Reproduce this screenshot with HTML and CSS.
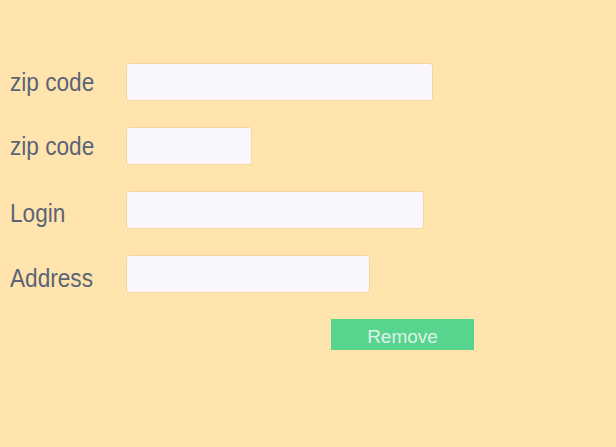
FILE: index.html
```html
<!DOCTYPE html>
<html>
<head>
<meta charset="utf-8">
<link rel="stylesheet" href="styles.css">
</head>
<body>
<form class="form">
  <div class="row"><label class="label"><span class="txt">zip code</span></label><input class="field w1" type="text"></div>
  <div class="row"><label class="label"><span class="txt">zip code</span></label><input class="field w2" type="text"></div>
  <div class="row"><label class="label low1"><span class="txt">Login</span></label><input class="field w3" type="text"></div>
  <div class="row"><label class="label low2"><span class="txt">Address</span></label><input class="field w4" type="text"></div>
  <div class="actions"><button class="btn" type="button">Remove</button></div>
</form>
</body>
</html>
```

FILE: styles.css
```css
html, body {
  margin: 0;
  padding: 0;
  background: #ffe4ad;
  height: 100%;
}
.form {
  display: flex;
  flex-direction: column;
  gap: 26px;
  padding: 63px 0 0 10px;
}
.row {
  display: flex;
  align-items: center;
  height: 38px;
}
.label {
  width: 116px;
  flex: none;
  font-family: "Liberation Sans", Arial, sans-serif;
  font-size: 26px;
  color: #5b6476;
}
.low1 { margin-top: 6px; }
.low2 { margin-top: 9px; }
.txt {
  display: inline-block;
  transform: scaleX(0.87);
  transform-origin: left center;
  white-space: nowrap;
}
.field {
  box-sizing: border-box;
  height: 38px;
  margin: 0;
  background: #f9f7fb;
  border: 1px solid #f3d6a2;
  border-radius: 3px;
  outline: none;
}
.w1 { width: 307px; }
.w2 { width: 126px; }
.w3 { width: 298px; }
.w4 { width: 244px; }
.actions {
  display: flex;
  padding-left: 321px;
}
.btn {
  width: 143px;
  height: 31px;
  margin: 0;
  border: none;
  border-radius: 0;
  background: #57d48d;
  color: #dff2e8;
  font-family: "Liberation Sans", Arial, sans-serif;
  font-size: 19px;
  padding: 5px 0 0;
}
.btn span { display: inline-block; }
```
